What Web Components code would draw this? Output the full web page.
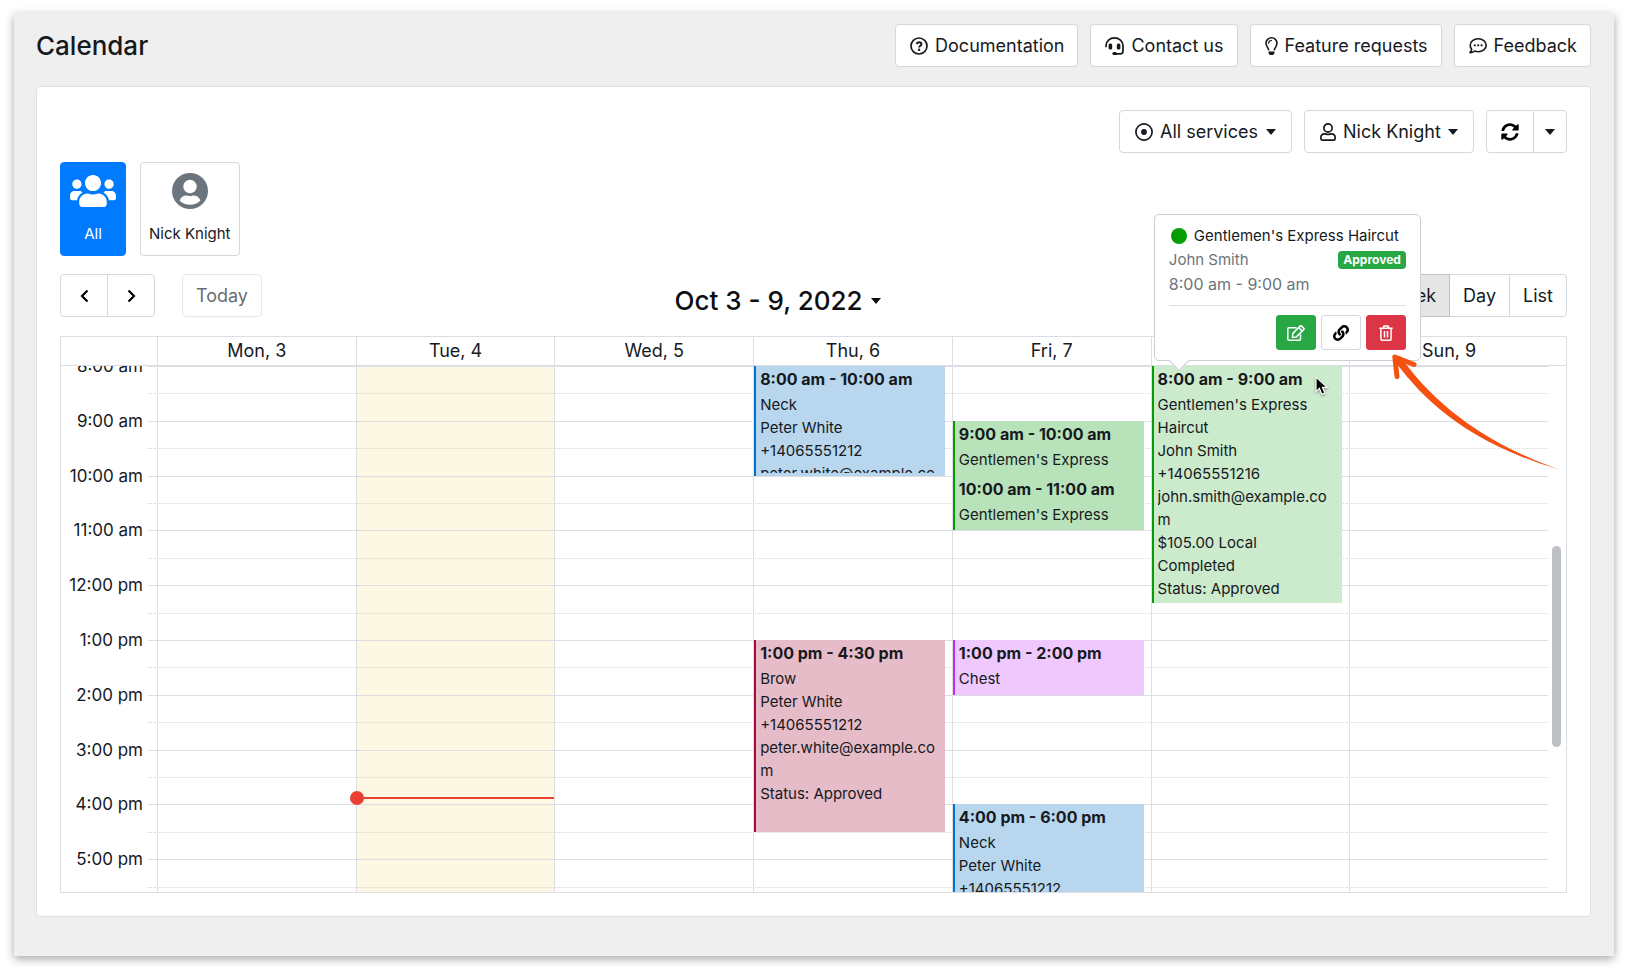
<!DOCTYPE html>
<html lang="en">
<head>
<meta charset="utf-8">
<meta name="viewport" content="width=device-width, initial-scale=1">
<title>Calendar</title>
<style>
	:root {
		--ink: #16191d;
		--muted: #6c757d;
		--line: #dcdee3;
		--control-line: #d3d8df;
		--blue: #007bff;
		--green: #28a745;
		--red: #dc3545;
		--control-height: 43px;
		--text: 18px;
		--text-hour: 17px;
		--text-time: 16px;
		--text-small: 15px;
		--text-title: 26px;
	}

	body {
		margin: 0;
		background: #fff;
		color: var(--ink);
		font-family: Inter, "Open Sans", sans-serif;
		font-size: var(--text);
	}
</style>
</head>
<body>
<booking-app></booking-app>

<script>
const ICONS = {
	question: ["0 0 18 18", 18, `<g fill="none" stroke="currentColor" stroke-width="1.7"><circle cx="9" cy="9" r="8"/><path d="M6.8 7.2c.2-1.200 1.100-1.900 2.300-1.900 1.300 0 2.300.8 2.300 1.900 0 1.500-2.200 1.600-2.200 3.200" stroke-width="2"/></g><circle cx="9.100" cy="12.800" r="1.200"/>`],
	headset: ["0 0 19 18", 19, `<path d="M1 9.500V8.600C1 4.300 4.900 .9 9.500 .9s8.500 3.400 8.500 7.700v5.600a2.600 2.600 0 0 1-2.600 2.600H10" fill="none" stroke="currentColor" stroke-width="1.700" stroke-linecap="round"/><rect x="3.600" y="6.500" width="3.600" height="6" rx="1.500"/><rect x="11.800" y="6.500" width="3.600" height="6" rx="1.500"/><rect x="7.400" y="15" width="4.600" height="3" rx="1.500"/>`],
	bulb: ["0 0 13 18", 13, `<path d="M3.800 13.300C3.500 10.700 1 9.500 1 6.300A5.500 5.500 0 0 1 12 6.300c0 3.200-2.500 4.400-2.800 7" fill="none" stroke="currentColor" stroke-width="1.600"/><path d="M3.700 6.300a2.800 2.800 0 0 1 2.800-2.800" fill="none" stroke="currentColor" stroke-width="1.200" stroke-linecap="round"/><path d="M3.500 14.500h6v1.400L8.200 18H4.800l-1.300-2.100z"/>`],
	comment: ["0 0 18 18", 18, `<path d="M9.200 1.800c4.400 0 8 2.900 8 6.500s-3.600 6.500-8 6.500c-1.300 0-2.500-.2-3.600-.7-1.200.9-2.800 1.500-4.700 1.500 1-1.100 1.600-2.200 1.800-3.400A5.800 5.800 0 0 1 1.200 8.300c0-3.600 3.600-6.500 8-6.500z" fill="none" stroke="currentColor" stroke-width="1.600" stroke-linejoin="round"/><circle cx="5.800" cy="8.300" r="1.100"/><circle cx="9.200" cy="8.300" r="1.100"/><circle cx="12.600" cy="8.300" r="1.100"/>`],
	dot: ["0 0 18 18", 18, `<circle cx="9" cy="9" r="8.100" fill="none" stroke="currentColor" stroke-width="1.700"/><circle cx="9" cy="9" r="2.900"/>`],
	user: ["0 0 16 18", 16, `<g fill="none" stroke="currentColor" stroke-width="1.700"><circle cx="8" cy="5" r="4.100"/><path d="M4.700 10.800c1.400 0 1.600.6 3.300.6s1.900-.6 3.300-.6c2.200 0 3.800 1.500 3.800 3.700v1.200c0 .8-.6 1.400-1.300 1.400H2.200c-.7 0-1.300-.6-1.300-1.400v-1.200c0-2.200 1.600-3.700 3.800-3.700z"/></g>`],
	sync: ["0 0 512 512", 18, `<path d="M370.720 133.280C339.458 104.008 298.888 87.962 255.848 88c-77.458.068-144.328 53.178-162.791 126.850-1.344 5.363-6.122 9.150-11.651 9.150H24.103c-7.498 0-13.194-6.807-11.807-14.176C33.933 94.924 134.813 8 256 8c66.448 0 126.791 26.136 171.315 68.685L463.030 40.970C478.149 25.851 504 36.559 504 57.941V192c0 13.255-10.745 24-24 24H345.941c-21.382 0-32.090-25.851-16.971-40.971l41.750-41.749zM32 296h134.059c21.382 0 32.090 25.851 16.971 40.971l-41.750 41.750c31.262 29.273 71.835 45.319 114.876 45.280 77.418-.070 144.315-53.144 162.787-126.849 1.344-5.363 6.122-9.150 11.651-9.150h57.304c7.498 0 13.194 6.807 11.807 14.176C478.067 417.076 377.187 504 256 504c-66.448 0-126.791-26.136-171.315-68.685L48.970 471.030C33.851 486.149 8 475.441 8 454.059V320c0-13.255 10.745-24 24-24z"/>`],
	caret: ["0 0 10 6", 10, `<path d="M0 0h10L5 6z"/>`],
	prev: ["0 0 9 14", 9, `<path d="M7.500 1.500 2 7l5.500 5.500" fill="none" stroke="currentColor" stroke-width="2.200"/>`],
	next: ["0 0 9 14", 9, `<path d="M1.500 1.500 7 7l-5.500 5.500" fill="none" stroke="currentColor" stroke-width="2.200"/>`],
	users: ["0 32 640 448", 46, `<path d="M96 224c35.300 0 64-28.700 64-64s-28.700-64-64-64-64 28.700-64 64 28.700 64 64 64zm448 0c35.300 0 64-28.700 64-64s-28.700-64-64-64-64 28.700-64 64 28.700 64 64 64zm32 32h-64c-17.600 0-33.500 7.100-45.100 18.600 40.300 22.100 68.900 62 75.100 109.400h66c17.700 0 32-14.300 32-32v-32c0-35.300-28.700-64-64-64zm-256 0c61.900 0 112-50.100 112-112S381.900 32 320 32 208 82.100 208 144s50.100 112 112 112zm76.800 32h-8.300c-20.800 10-43.900 16-68.500 16s-47.600-6-68.500-16h-8.300C179.600 288 128 339.600 128 403.200V432c0 26.500 21.500 48 48 48h288c26.500 0 48-21.500 48-48v-28.800c0-63.600-51.600-115.200-115.200-115.200zm-223.700-13.400C161.500 263.100 145.600 256 128 256H64c-35.300 0-64 28.700-64 64v32c0 17.700 14.300 32 32 32h65.900c6.300-47.400 34.900-87.300 75.200-109.400z"/>`],
	avatar: ["0 0 36 36", 36, `<circle cx="18" cy="18" r="18"/><circle cx="18" cy="13.500" r="6.700" fill="#fff"/><path d="M7.600 27.400c1.200-3.200 3.800-5 6.600-5 1.200 0 2.200.6 3.800.6s2.600-.6 3.800-.6c2.800 0 5.400 1.800 6.600 5a14.500 14.500 0 0 1-20.800 0z" fill="#fff"/>`],
	edit: ["0 0 18 16", 18, `<g fill="none" stroke="currentColor" stroke-width="1.500" stroke-linejoin="round"><path d="M9.500 2.700H1.800a1 1 0 0 0-1 1v10.500a1 1 0 0 0 1 1h10.700a1 1 0 0 0 1-1V9.500"/><path d="M5.800 8.400 13.300.9a.7.7 0 0 1 1 0l2.600 2.500a.7.7 0 0 1 0 1L9.400 11.900l-3.900.4zM11.800 2.700l3.400 3.400"/></g>`],
	link: ["0 0 512 512", 16, `<path d="M326.612 185.391c59.747 59.809 58.927 155.698.360 214.590-.110.120-.240.250-.360.370l-67.200 67.200c-59.270 59.270-155.699 59.262-214.960 0-59.270-59.260-59.270-155.700 0-214.960l37.106-37.106c9.840-9.840 26.786-3.300 27.294 10.606.648 17.722 3.826 35.527 9.690 52.721 1.986 5.822.567 12.262-3.783 16.612l-13.087 13.087c-28.026 28.026-28.905 73.660-1.155 101.960 28.024 28.579 74.086 28.749 102.325.510l67.200-67.190c28.191-28.191 28.073-73.757 0-101.830-3.701-3.694-7.429-6.564-10.341-8.569a16.037 16.037 0 0 1-6.947-12.606c-.396-10.567 3.348-21.456 11.698-29.806l21.054-21.055c5.521-5.521 14.182-6.199 20.584-1.731a152.482 152.482 0 0 1 20.522 17.197zM467.547 44.449c-59.261-59.262-155.690-59.270-214.960 0l-67.200 67.200c-.120.120-.250.250-.360.370-58.566 58.892-59.387 154.781.360 214.590a152.454 152.454 0 0 0 20.521 17.196c6.402 4.468 15.064 3.789 20.584-1.731l21.054-21.055c8.350-8.350 12.094-19.239 11.698-29.806a16.037 16.037 0 0 0-6.947-12.606c-2.912-2.005-6.640-4.875-10.341-8.569-28.073-28.073-28.191-73.639 0-101.830l67.200-67.190c28.239-28.239 74.300-28.069 102.325.510 27.750 28.300 26.872 73.934-1.155 101.960l-13.087 13.087c-4.350 4.350-5.769 10.790-3.783 16.612 5.864 17.194 9.042 34.999 9.690 52.721.509 13.906 17.454 20.446 27.294 10.606l37.106-37.106c59.271-59.259 59.271-155.699.001-214.959z"/>`],
	trash: ["0 0 14 16", 14, `<g fill="none" stroke="currentColor" stroke-width="1.500" stroke-linejoin="round"><path d="M.3 3.300h13.400M4 3.300 5 .9h4l1 2.400M1.900 3.300v10.900a1 1 0 0 0 1 1h8.200a1 1 0 0 0 1-1V3.300M5.500 6v6.500M8.500 6v6.500"/></g>`],
};

class AppIcon extends HTMLElement {
	connectedCallback() {
		const [box, width, shapes] = ICONS[this.getAttribute("name")];
		this.attachShadow({ mode: "open" }).innerHTML = `
			<style>
				:host { display: inline-flex; flex: none; }
				svg { display: block; height: auto; }
			</style>
			<svg viewBox="${box}" width="${width}" fill="currentColor" aria-hidden="true">${shapes}</svg>
		`;
	}
}

// Shared look of every boxed control
const CONTROL = `
	* { box-sizing: border-box; }
	button, a, .control {
		display: inline-flex;
		align-items: center;
		justify-content: center;
		gap: 7px;
		height: var(--control-height);
		margin: 0;
		padding: 0 13px 0 14px;
		border: 1px solid var(--control-line);
		border-radius: 4px;
		background: #fff;
		color: var(--ink);
		font: inherit;
		line-height: 24px;
		text-decoration: none;
		white-space: nowrap;
		cursor: pointer;
	}
`;

class LinkButton extends HTMLElement {
	connectedCallback() {
		this.attachShadow({ mode: "open" }).innerHTML = `
			<style>
				${CONTROL}
				:host { display: block; }
			</style>
			<a href="${this.getAttribute("href")}"><app-icon name="${this.getAttribute("icon")}"></app-icon><slot></slot></a>
		`;
	}
}

class FilterSelect extends HTMLElement {
	connectedCallback() {
		this.attachShadow({ mode: "open" }).innerHTML = `
			<style>
				${CONTROL}
				:host { display: block; }
				.control { padding: 0 15px; }
				select {
					appearance: none;
					margin: 0;
					padding: 0;
					border: 0;
					background: none;
					color: inherit;
					font: inherit;
				}
			</style>
			<label class="control">
				<app-icon name="${this.getAttribute("icon")}"></app-icon>
				<select aria-label="${this.getAttribute("label")}"><option>${this.getAttribute("value")}</option></select>
				<app-icon name="caret"></app-icon>
			</label>
		`;
	}
}

class StaffTile extends HTMLElement {
	connectedCallback() {
		this.attachShadow({ mode: "open" }).innerHTML = `
			<style>
				${CONTROL}
				:host { display: block; }
				button {
					flex-direction: column;
					justify-content: space-between;
					min-width: 66px;
					height: 94px;
					padding: 10px 8px 9px;
					font-size: var(--text-small);
				}
				.picture { display: flex; align-items: center; height: 36px; color: var(--muted); }
				:host([active]) button { border-color: var(--blue); background: var(--blue); color: #fff; }
				:host([active]) .picture { color: #fff; }
			</style>
			<button type="button" aria-pressed="${this.hasAttribute("active")}">
				<span class="picture"><app-icon name="${this.getAttribute("icon")}"></app-icon></span>
				<slot></slot>
			</button>
		`;
	}
}

class ButtonGroup extends HTMLElement {
	connectedCallback() {
		this.attachShadow({ mode: "open" }).innerHTML = `
			<style>
				:host { display: flex; }
				::slotted(button) {
					display: flex;
					align-items: center;
					justify-content: center;
					height: var(--control-height);
					margin: 0 0 0 -1px;
					padding: 0 13px;
					border: 1px solid var(--control-line);
					background: #fff;
					color: var(--ink);
					font: inherit;
				}
				::slotted(button:first-child) { margin-left: 0; border-radius: 4px 0 0 4px; }
				::slotted(button:last-child) { border-radius: 0 4px 4px 0; }
				::slotted(button:only-child) { border-radius: 4px; }
				::slotted(button[aria-pressed="true"]) { border-color: #bfc4ca; background: #e6e6e6; z-index: 1; }
				::slotted(button.step) { width: 48px; color: #000; }
				::slotted(button.narrow) { padding: 0 11px; }
				::slotted(button:disabled) { border-color: #e4e7ea; color: #6a6d70; }
			</style>
			<slot></slot>
		`;
	}
}

class CalendarEvent extends HTMLElement {
	connectedCallback() {
		const [from, to] = [this.getAttribute("from"), this.getAttribute("to")].map(Number);
		const open = this.hasAttribute("open");
		this.attachShadow({ mode: "open" }).innerHTML = `
			<style>
				:host {
					display: block;
					box-sizing: border-box;
					grid-area: ${from} / 1 / ${open ? "span 1" : to} / 2;
					min-height: 0;
					height: ${open ? "max-content" : "auto"};
					margin-right: 7px;
					padding: 0 4px 3px;
					border-left: 2px solid var(--edge);
					background: var(--fill);
					font-size: var(--text-small);
					line-height: 23px;
				}
				:host([tone="blue"]) { --edge: #0073cf; --fill: #b8d7ef; }
				:host([tone="green"]) { --edge: #069c06; --fill: #b8e2b9; }
				:host([tone="green"][open]) { --fill: #cceacc; }
				:host([tone="rose"]) { --edge: #a50a3c; --fill: #e6bcc8; }
				:host([tone="violet"]) { --edge: #b72ff5; --fill: #efc8fd; }
				.clip { height: 100%; overflow: hidden; overflow-wrap: anywhere; }
				b { display: block; font-size: var(--text-time); font-weight: 700; line-height: 27px; white-space: nowrap; }
			</style>
			<div class="clip"><b>${this.getAttribute("time")}</b><slot></slot></div>
		`;
	}
}

class AppointmentPopover extends HTMLElement {
	connectedCallback() {
		this.attachShadow({ mode: "open" }).innerHTML = `
			<style>
				* { box-sizing: border-box; }
				:host {
					position: absolute;
					display: block;
					box-sizing: border-box;
					width: 267px;
					padding: 9px 14px 10px;
					border: 1px solid #ccced1;
					border-radius: 5px;
					background: #fff;
					font-size: var(--text-small);
					line-height: 24px;
				}
				:host::after {
					content: "";
					position: absolute;
					bottom: -8px;
					left: 17px;
					width: 13px;
					height: 13px;
					border: solid #ccced1;
					border-width: 0 1px 1px 0;
					background: #fff;
					transform: rotate(45deg);
				}
				.row { display: flex; align-items: center; justify-content: space-between; white-space: nowrap; }
				.service { justify-content: flex-start; gap: 7px; }
				.dot { width: 16px; height: 16px; margin-left: 2px; border-radius: 50%; background: #069c06; }
				.muted { color: var(--muted); }
				.time { font-size: var(--text-time); }
				.badge { padding: 0 5px; border-radius: 4px; background: var(--green); color: #fff; font-size: 12px; font-weight: 700; line-height: 18px; }
				hr { margin: 9px 0; border: 0; border-top: 1px solid var(--line); }
				.actions { display: flex; justify-content: flex-end; gap: 5px; }
				button {
					display: flex;
					align-items: center;
					justify-content: center;
					width: 40px;
					height: 35px;
					padding: 0;
					border: 1px solid var(--control-line);
					border-radius: 3px;
					background: #fff;
					color: #000;
				}
				.edit { border-color: var(--green); background: var(--green); color: #fff; }
				.delete { border-color: var(--red); background: var(--red); color: #fff; }
			</style>
			<div class="row service"><span class="dot"></span><slot name="service"></slot></div>
			<div class="row"><span class="muted"><slot name="client"></slot></span><span class="badge"><slot name="status"></slot></span></div>
			<div class="muted time"><slot name="time"></slot></div>
			<hr>
			<div class="actions">
				<button class="edit" type="button" aria-label="Edit"><app-icon name="edit"></app-icon></button>
				<button type="button" aria-label="Copy link"><app-icon name="link"></app-icon></button>
				<button class="delete" type="button" aria-label="Delete"><app-icon name="trash"></app-icon></button>
			</div>
		`;
	}
}

class WeekGrid extends HTMLElement {
	connectedCallback() {
		const days = ["Mon, 3", "Tue, 4", "Wed, 5", "Thu, 6", "Fri, 7", "Sat, 8", "Sun, 9"];
		const hours = ["8:00 am", "9:00 am", "10:00 am", "11:00 am", "12:00 pm", "1:00 pm", "2:00 pm", "3:00 pm", "4:00 pm", "5:00 pm"];
		const today = 1;

		const labels = hours.map((hour, i) => `<span class="hour" style="grid-row: ${i * 2 + 1}">${hour}</span>`).join("");
		const columns = days.map((day, i) => `
			<div class="day${i === today ? " today" : ""}" style="grid-column: ${i + 2}"><slot name="day-${i + 1}"></slot></div>
		`).join("");
		const slots = Array.from({ length: hours.length * 2 }, (_, i) => `<i class="slot" style="grid-row: ${i + 1}"></i>`).join("");

		this.attachShadow({ mode: "open" }).innerHTML = `
			<style>
				* { box-sizing: border-box; }
				:host {
					--axis: 96px;
					--gutter: 18px;
					position: relative;
					display: block;
					border: 1px solid var(--line);
				}
				.head {
					display: grid;
					grid-template-columns: var(--axis) repeat(7, 1fr);
					padding-right: var(--gutter);
					border-bottom: 1px solid var(--line);
					line-height: 28px;
					text-align: center;
				}
				.head span { border-left: 1px solid var(--line); }
				.head span:first-child { border: 0; }
				.view { display: flex; height: 526px; overflow: hidden; }
				.body {
					position: relative;
					isolation: isolate;
					display: grid;
					flex: 1;
					grid-template-columns: var(--axis) repeat(7, 1fr);
					grid-template-rows: repeat(20, 1fr);
					height: 548px;
				}
				.hour {
					grid-column: 1;
					height: 24px;
					margin-top: -12px;
					padding-right: 14px;
					font-size: var(--text-hour);
					line-height: 24px;
					text-align: right;
				}
				.day {
					z-index: 1;
					display: grid;
					grid-row: 1 / -1;
					grid-template-columns: minmax(0, 1fr);
					grid-template-rows: repeat(20, 1fr);
					border-left: 1px solid var(--line);
				}
				.today { z-index: -1; background: #fdf8e4; }
				.slot {
					grid-column: 1 / -1;
					margin-left: 87px;
					border-top: 1px dotted #d5d7db;
				}
				.slot:nth-of-type(odd) { border-top: 1px solid var(--line); }
				.now {
					position: absolute;
					top: 79%;
					left: calc(var(--axis) + (100% - var(--axis)) / 7);
					width: calc((100% - var(--axis)) / 7);
					height: 2px;
					margin-top: -2px;
					background: #ea4033;
					z-index: 2;
				}
				.now::before {
					content: "";
					position: absolute;
					top: -6px;
					left: -6px;
					width: 14px;
					height: 14px;
					border-radius: 50%;
					background: inherit;
				}
				.scroll {
					display: grid;
					grid-template-rows: 180fr 201fr 145fr;
					width: var(--gutter);
					padding: 0 5px 0 4px;
				}
				.thumb { grid-row: 2; border-radius: 5px; background: #bdc0c5; }
			</style>
			<div class="head"><span></span>${days.map((day) => `<span>${day}</span>`).join("")}</div>
			<div class="view">
				<div class="body">${labels}${slots}${columns}<div class="now"></div></div>
				<div class="scroll"><div class="thumb"></div></div>
			</div>
			<slot name="overlay"></slot>
		`;
	}
}

const MARKS = {
	cursor: `<svg class="shadow" width="14" height="20" viewBox="0 0 14 20"><path d="M1 1v14.600l3.400-3.200 2.500 6 3-1.300-2.500-5.800h4.800z" fill="#000" stroke="#fff" stroke-width="1.200"/></svg>`,
	arrow: `<svg width="168" height="116" viewBox="0 0 168 116"><path d="M2 6C26 38.500 68 86.500 167 115.500 73 82 31 34 8 2z" fill="#f4500f"/><path d="M5 22.500 2.800 3 22 10.500" fill="none" stroke="#f4500f" stroke-width="5" stroke-linecap="round" stroke-linejoin="round"/></svg>`,
};

class PointerMark extends HTMLElement {
	connectedCallback() {
		this.attachShadow({ mode: "open" }).innerHTML = `
			<style>
				:host { position: absolute; display: block; pointer-events: none; z-index: 3; }
				svg { display: block; overflow: visible; }
				.shadow { filter: drop-shadow(0 1px 1px rgba(0, 0, 0, .4)); }
			</style>
			${MARKS[this.getAttribute("kind")]}
		`;
	}
}

class BookingApp extends HTMLElement {
	connectedCallback() {
		this.attachShadow({ mode: "open" }).innerHTML = `
			<style>
				* { box-sizing: border-box; }
				:host { display: block; padding: 13px 14px 14px; }
				.frame {
					padding: 11px 23px 39px 22px;
					background: #efefef;
					box-shadow: 0 3px 9px rgba(0, 0, 0, .35);
				}
				header, .filters, .staff, .toolbar { display: flex; }
				header { align-items: center; gap: 12px; margin-bottom: 19px; }
				h1 { margin: 0 auto 0 0; font-size: var(--text-title); font-weight: 500; line-height: 32px; }
				main {
					padding: 23px;
					border: 1px solid #dfe0e2;
					border-radius: 4px;
					background: #fff;
				}
				.filters { justify-content: flex-end; gap: 12px; }
				.staff { gap: 14px; margin: 9px 0 18px; }
				.toolbar { justify-content: space-between; margin-bottom: 19px; }
				.steps { display: flex; gap: 27px; }
				.range {
					display: flex;
					align-items: center;
					gap: 8px;
					margin: 10px 0 0;
					padding: 0;
					border: 0;
					background: none;
					color: #0c0e10;
					font: inherit;
					font-size: var(--text-title);
					font-weight: 500;
					line-height: 33px;
				}
				appointment-popover { left: calc(97px + (100% - 115px) * 5 / 7 + 3px); top: -123px; z-index: 2; }
				.cursor { left: calc(97px + (100% - 115px) * 5 / 7 + 164px); top: 39px; }
				.arrow { left: calc(97px + (100% - 115px) * 6 / 7 + 43px); top: 17px; }
			</style>
			<div class="frame">
				<header>
					<h1>Calendar</h1>
					<link-button href="#docs" icon="question">Documentation</link-button>
					<link-button href="#contact" icon="headset">Contact us</link-button>
					<link-button href="#features" icon="bulb">Feature requests</link-button>
					<link-button href="#feedback" icon="comment">Feedback</link-button>
				</header>
				<main>
					<div class="filters">
						<filter-select icon="dot" label="Services" value="All services"></filter-select>
						<filter-select icon="user" label="Staff" value="Nick Knight"></filter-select>
						<button-group>
							<button class="step" type="button" aria-label="Refresh"><app-icon name="sync"></app-icon></button>
							<button class="narrow" type="button" aria-label="Refresh options"><app-icon name="caret"></app-icon></button>
						</button-group>
					</div>
					<div class="staff">
						<staff-tile icon="users" active>All</staff-tile>
						<staff-tile icon="avatar">Nick Knight</staff-tile>
					</div>
					<div class="toolbar">
						<div class="steps">
							<button-group>
								<button class="step" type="button" aria-label="Previous week"><app-icon name="prev"></app-icon></button>
								<button class="step" type="button" aria-label="Next week"><app-icon name="next"></app-icon></button>
							</button-group>
							<button-group><button type="button" disabled>Today</button></button-group>
						</div>
						<button class="range" type="button">Oct 3 - 9, 2022<app-icon name="caret"></app-icon></button>
						<button-group>
							<button type="button">Month</button>
							<button type="button" aria-pressed="true">Week</button>
							<button type="button">Day</button>
							<button type="button">List</button>
						</button-group>
					</div>
					<week-grid>
						<calendar-event slot="day-4" tone="blue" from="1" to="5" time="8:00 am - 10:00 am">
							<div>Neck</div><div>Peter White</div><div>+14065551212</div><div>peter.white@example.com</div>
						</calendar-event>
						<calendar-event slot="day-4" tone="rose" from="11" to="18" time="1:00 pm - 4:30 pm">
							<div>Brow</div><div>Peter White</div><div>+14065551212</div><div>peter.white@example.com</div><div>Status: Approved</div>
						</calendar-event>
						<calendar-event slot="day-5" tone="green" from="3" to="5" time="9:00 am - 10:00 am">
							<div>Gentlemen's Express</div>
						</calendar-event>
						<calendar-event slot="day-5" tone="green" from="5" to="7" time="10:00 am - 11:00 am">
							<div>Gentlemen's Express</div>
						</calendar-event>
						<calendar-event slot="day-5" tone="violet" from="11" to="13" time="1:00 pm - 2:00 pm">
							<div>Chest</div>
						</calendar-event>
						<calendar-event slot="day-5" tone="blue" from="17" to="21" time="4:00 pm - 6:00 pm">
							<div>Neck</div><div>Peter White</div><div>+14065551212</div>
						</calendar-event>
						<calendar-event slot="day-6" tone="green" from="1" to="3" time="8:00 am - 9:00 am" open>
							<div>Gentlemen's Express Haircut</div><div>John Smith</div><div>+14065551216</div><div>john.smith@example.com</div><div>$105.00 Local Completed</div><div>Status: Approved</div>
						</calendar-event>
						<appointment-popover slot="overlay">
							<span slot="service">Gentlemen's Express Haircut</span>
							<span slot="client">John Smith</span>
							<span slot="status">Approved</span>
							<span slot="time">8:00 am - 9:00 am</span>
						</appointment-popover>
						<pointer-mark class="cursor" slot="overlay" kind="cursor"></pointer-mark>
						<pointer-mark class="arrow" slot="overlay" kind="arrow"></pointer-mark>
					</week-grid>
				</main>
			</div>
		`;
	}
}

customElements.define("app-icon", AppIcon);
customElements.define("link-button", LinkButton);
customElements.define("filter-select", FilterSelect);
customElements.define("staff-tile", StaffTile);
customElements.define("button-group", ButtonGroup);
customElements.define("calendar-event", CalendarEvent);
customElements.define("appointment-popover", AppointmentPopover);
customElements.define("week-grid", WeekGrid);
customElements.define("pointer-mark", PointerMark);
customElements.define("booking-app", BookingApp);
</script>
</body>
</html>
